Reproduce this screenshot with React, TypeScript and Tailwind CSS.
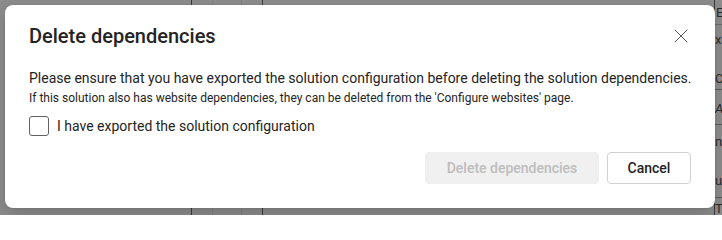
import { X } from "lucide-react";

const font = { fontFamily: '"Segoe UI", Roboto, "Noto Sans", sans-serif' };

export default function App() {
  return (
    <div
      className="relative w-[722px] h-[215px] overflow-hidden bg-[#8b8b8b] text-[#242424]"
      style={font}
    >
      {/* dimmed page behind the dialog */}
      <div className="flex h-full">
        <div className="w-[192px] border-r border-[#3a3a3a]" />
        <div className="w-[21px] border-r border-[#7f7f7f]" />
        <div className="w-[29px] border-r border-[#7f7f7f]" />
        <div className="w-[21px] border-r border-[#3a3a3a]" />
        <div className="flex-1" />
      </div>

      {/* right edge of the table behind */}
      <div className="absolute right-0 top-0 w-[8px] h-full flex flex-col text-[13px] leading-none text-[#2a2a2a] border-l border-[#3a3a3a]">
        <div className="h-[26px] pt-[6px] pl-[1px] border-b border-[#6a6a6a]">E</div>
        <div className="h-[36px] pt-[8px]">xa</div>
        <div className="h-[30px] pt-[12px] border-b border-[#5a5a5a]">Ca</div>
        <div className="h-[36px] pt-[12px] italic border-b border-[#5a5a5a]">A</div>
        <div className="h-[74px] pt-[10px]">
          <div>n</div>
          <div className="mt-[26px]">u</div>
        </div>
        <div className="pt-[4px] border-t border-[#5a5a5a]">Th</div>
      </div>

      {/* dialog */}
      <div className="absolute left-[5px] top-[5px] w-[710px] h-[203px] rounded-[8px] bg-white px-[24px] pt-[17px] shadow-[0_0_2px_rgba(0,0,0,0.12),0_8px_16px_rgba(0,0,0,0.14)]">
        <div className="flex items-center justify-between">
          <h2 className="text-[20px] leading-[28px] font-medium">Delete dependencies</h2>
          <button className="w-[24px] h-[24px] flex items-center justify-center -mr-[2px] text-[#424242]">
            <X size={24} strokeWidth={0.9} />
          </button>
        </div>

        <p className="mt-[18px] text-[14px] leading-[20px] whitespace-nowrap">
          Please ensure that you have exported the solution configuration before deleting the solution dependencies.
        </p>
        <p className="mt-[2px] text-[12px] leading-[16px]">
          If this solution also has website dependencies, they can be deleted from the 'Configure websites' page.
        </p>

        <label className="mt-[10px] flex items-center gap-[8px] text-[14px] leading-[20px]">
          <span className="w-[20px] h-[20px] rounded-[3px] border border-[#616161]" />
          <span>I have exported the solution configuration</span>
        </label>

        <div className="mt-[16px] flex justify-end gap-[8px]">
          <button
            disabled
            className="h-[32px] w-[174px] rounded-[4px] bg-[#f0f0f0] text-[14px] font-medium text-[#bdbdbd]"
          >
            Delete dependencies
          </button>
          <button className="h-[32px] w-[84px] rounded-[4px] border border-[#d1d1d1] bg-white text-[14px] font-medium text-[#242424]">
            Cancel
          </button>
        </div>
      </div>
    </div>
  );
}
